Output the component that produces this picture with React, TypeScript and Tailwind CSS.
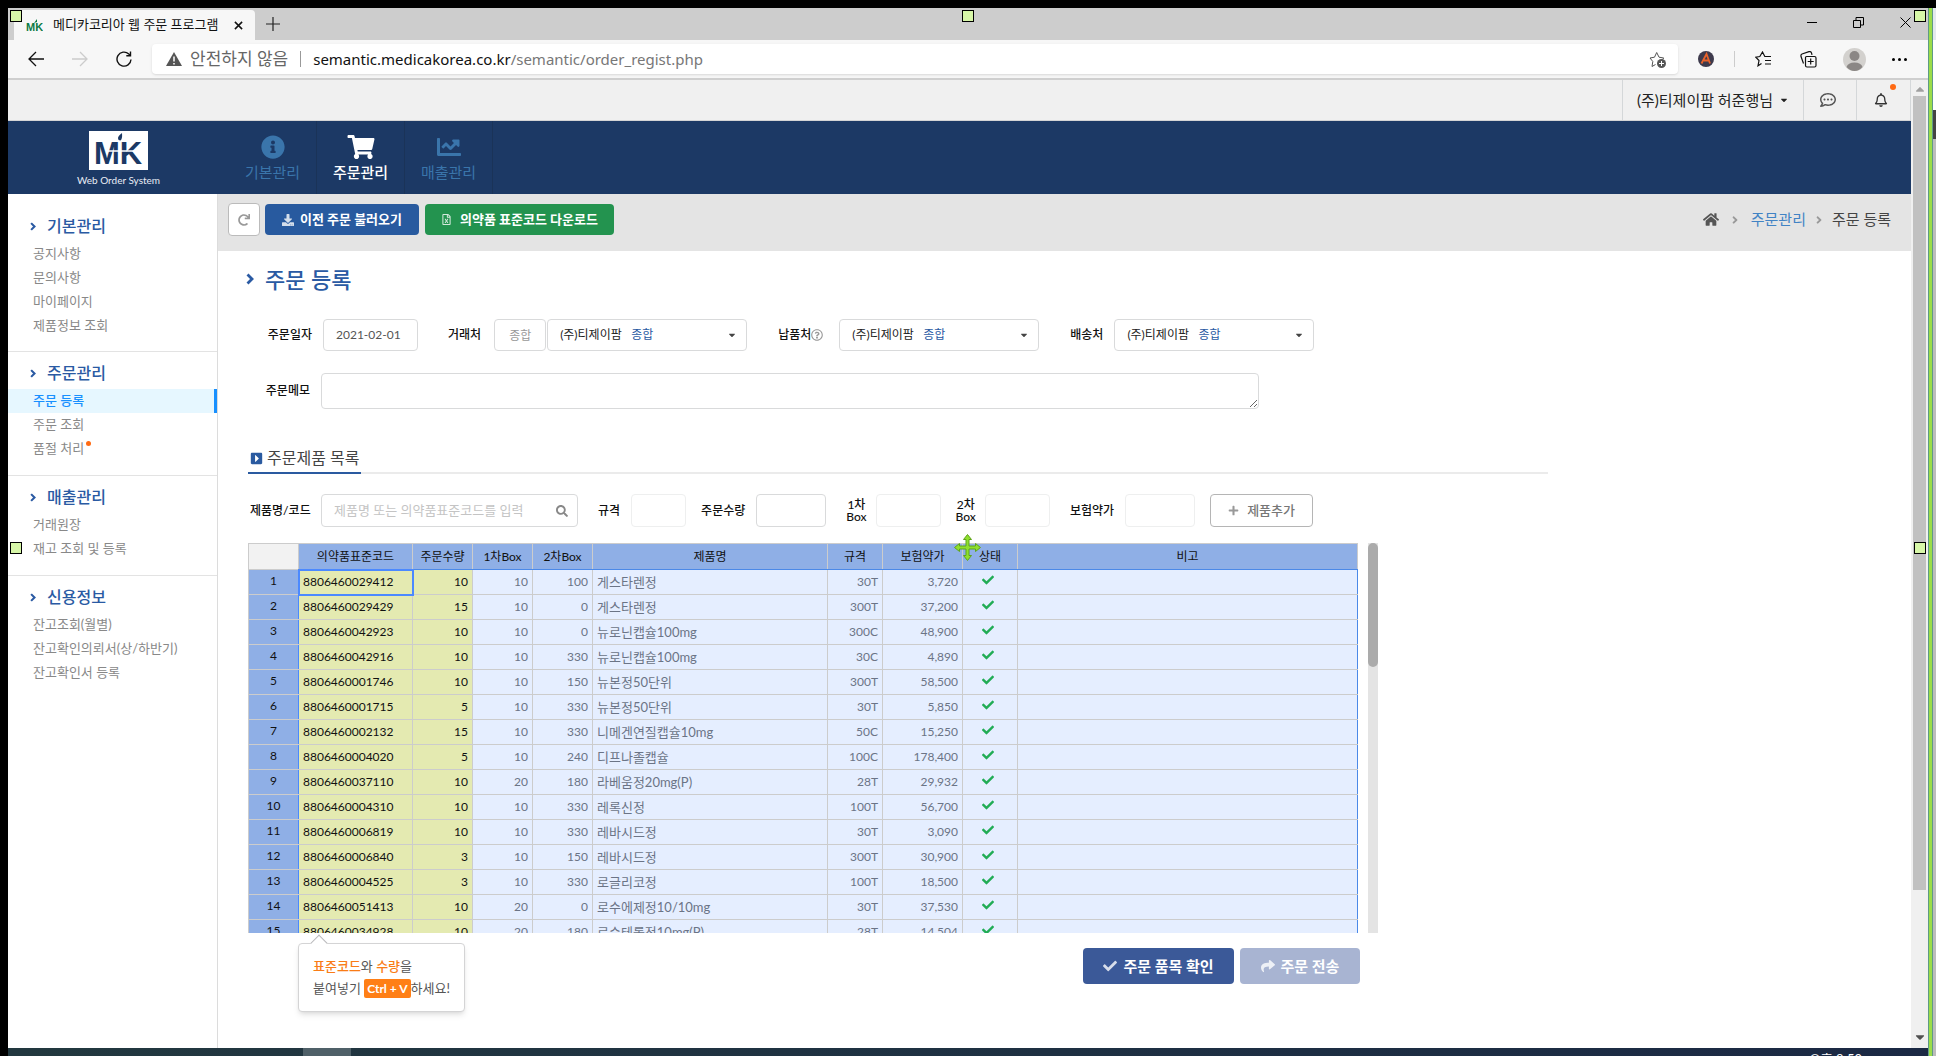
import type { ReactNode } from "react";
import {
  FaInfoCircle,
  FaShoppingCart,
  FaChartLine,
  FaDownload,
  FaRegFileExcel,
  FaHome,
  FaCheck,
  FaShare,
  FaPlus,
  FaSearch,
  FaCaretDown,
  FaCaretUp,
  FaRedo,
  FaAngleRight,
  FaRegCommentDots,
  FaRegBell,
  FaRegQuestionCircle,
  FaCaretSquareRight,
} from "react-icons/fa";

type Row = [string, number, number, number, string, string, string];

const rows: Row[] = [
  ["8806460029412", 10, 10, 100, "게스타렌정", "30T", "3,720"],
  ["8806460029429", 15, 10, 0, "게스타렌정", "300T", "37,200"],
  ["8806460042923", 10, 10, 0, "뉴로닌캡슐100mg", "300C", "48,900"],
  ["8806460042916", 10, 10, 330, "뉴로닌캡슐100mg", "30C", "4,890"],
  ["8806460001746", 10, 10, 150, "뉴본정50단위", "300T", "58,500"],
  ["8806460001715", 5, 10, 330, "뉴본정50단위", "30T", "5,850"],
  ["8806460002132", 15, 10, 330, "니메겐연질캡슐10mg", "50C", "15,250"],
  ["8806460004020", 5, 10, 240, "디프나졸캡슐", "100C", "178,400"],
  ["8806460037110", 10, 20, 180, "라베움정20mg(P)", "28T", "29,932"],
  ["8806460004310", 10, 10, 330, "레록신정", "100T", "56,700"],
  ["8806460006819", 10, 10, 330, "레바시드정", "30T", "3,090"],
  ["8806460006840", 3, 10, 150, "레바시드정", "300T", "30,900"],
  ["8806460004525", 3, 10, 330, "로글리코정", "100T", "18,500"],
  ["8806460051413", 10, 20, 0, "로수에제정10/10mg", "30T", "37,530"],
  ["8806460034928", 10, 20, 180, "로수테롤정10mg(P)", "28T", "14,504"],
];

const menu = [
  { title: "기본관리", items: ["공지사항", "문의사항", "마이페이지", "제품정보 조회"] },
  { title: "주문관리", items: ["주문 등록", "주문 조회", "품절 처리"] },
  { title: "매출관리", items: ["거래원장", "재고 조회 및 등록"] },
  { title: "신용정보", items: ["잔고조회(월별)", "잔고확인의뢰서(상/하반기)", "잔고확인서 등록"] },
];

function BoldChevron({ className }: { className: string }) {
  return (
    <svg className={className} viewBox="0 0 8 12" fill="none" aria-hidden="true">
      <path d="M1.500 1.500L6 6l-4.500 4.500" stroke="currentColor" strokeWidth="2.800" />
    </svg>
  );
}

function TitleBar() {
  return (
    <div className="flex h-8 shrink-0 items-stretch bg-[#cdcdcd] pl-1.5">
      <div className="mt-[2px] flex w-[241px] items-center rounded-t bg-[#f7f7f7] pl-3 text-[13px] text-[#111]">
        <svg width="17" height="14" viewBox="0 0 17 14" aria-hidden="true">
          <text x="0" y="13" fontSize="11" fontWeight="700" fontFamily="Liberation Sans" fill="#0b7a45">
            MK
          </text>
          <path d="M8 5 l3 -4 l0 3z" fill="#0b7a45" />
        </svg>
        <span className="ml-2.5 whitespace-nowrap text-[13px]">메디카코리아 웹 주문 프로그램</span>
        <button aria-label="탭 닫기" className="mr-3 ml-auto">
          <svg width="9" height="9" viewBox="0 0 10 10" stroke="#111" strokeWidth="1.7">
            <path d="M1 1l8 8M9 1l-8 8" />
          </svg>
        </button>
      </div>
      <button aria-label="새 탭" className="ml-2.5 flex items-center">
        <svg width="16" height="16" viewBox="0 0 16 16" stroke="#222" strokeWidth="1.2">
          <path d="M8 1v14M1 8h14" />
        </svg>
      </button>
      <div className="mr-[17px] ml-auto flex items-center gap-9 pt-2 pb-3">
        <button aria-label="최소화">
          <svg width="10" height="10" viewBox="0 0 10 10" stroke="#000">
            <path d="M0 5.500h10" />
          </svg>
        </button>
        <button aria-label="이전 크기로">
          <svg width="11" height="11" viewBox="0 0 11 11" stroke="#000" fill="none">
            <path d="M.5 3.500h7v7h-7zM3 3V.5h7.500V8H8" />
          </svg>
        </button>
        <button aria-label="닫기">
          <svg width="11" height="11" viewBox="0 0 11 11" stroke="#000">
            <path d="M.5 .5l10 10M10.500 .5l-10 10" />
          </svg>
        </button>
      </div>
    </div>
  );
}

function AddressBar() {
  return (
    <div className="flex h-[40px] shrink-0 items-center border-b-2 border-[#cfcfcf] bg-[#f7f7f7] pl-5">
      <button aria-label="뒤로">
        <svg width="16" height="16" viewBox="0 0 16 16" stroke="#111" strokeWidth="1.3" fill="none">
          <path d="M16 8H1M8 1L1 8l7 7" />
        </svg>
      </button>
      <button aria-label="앞으로" className="ml-7">
        <svg width="16" height="16" viewBox="0 0 16 16" stroke="#ccc" strokeWidth="1.3" fill="none">
          <path d="M0 8h15M8 1l7 7-7 7" />
        </svg>
      </button>
      <button aria-label="새로 고침" className="ml-7">
        <svg width="16" height="16" viewBox="0 0 16 16" stroke="#111" strokeWidth="1.4" fill="none">
          <path d="M15 8.500A7 7 0 1 1 12.800 3L14.500 4.500M14.500 .5v4.200h-4.200" />
        </svg>
      </button>
      <div className="ml-5 flex h-[30px] flex-1 items-center rounded bg-white pr-3 pl-3.5 shadow-sm">
        <svg width="16" height="14" viewBox="0 0 16 14" aria-hidden="true">
          <path d="M8 0l8 14H0z" fill="#555" />
          <path d="M8 4.500v5M8 11v1.500" stroke="#fff" strokeWidth="1.500" />
        </svg>
        <span className="ml-2 text-[17px] text-[#666]">안전하지 않음</span>
        <span className="mx-3 h-4 w-px bg-[#999]" />
        <span className="font-['Noto_Sans'] text-[15px] text-[#111]">
          semantic.medicakorea.co.kr<span className="text-[#777]">/semantic/order_regist.php</span>
        </span>
        <svg className="ml-auto" width="17" height="17" viewBox="0 0 17 17" fill="none" aria-hidden="true">
          <path d="M6.500 13.500l-3.500 2 .8-5L1 7l4.500-.8L7.700 1.500 10 6.200l4.800.8-1.500 1.500" stroke="#555" />
          <circle cx="12.500" cy="12.500" r="4.500" fill="#555" />
          <path d="M12.500 10v5M10 12.500h5" stroke="#fff" />
        </svg>
      </div>
      <div className="ml-5 flex items-center pr-[21px]">
        <svg width="16" height="16" viewBox="0 0 16 16" aria-hidden="true">
          <circle cx="8" cy="8" r="8" fill="#3d3a4c" />
          <path d="M3.500 12.500L8.500 3l3.500 9.500M6 9.500h5" stroke="#e8622a" strokeWidth="1.800" fill="none" />
        </svg>
        <span className="ml-5 h-4 w-px bg-[#ccc]" />
        <button aria-label="즐겨찾기" className="ml-5">
          <svg width="17" height="16" viewBox="0 0 17 16" stroke="#111" strokeWidth="1.200" fill="none">
            <path d="M6.500 12.500L3 14.800 4 9.500.8 6.200l4-.7L7.500 1l2.300 4.500H16M10 9.500h6M10 13h6" />
          </svg>
        </button>
        <button aria-label="컬렉션" className="ml-7">
          <svg width="17" height="17" viewBox="0 0 17 17" stroke="#111" strokeWidth="1.200" fill="none">
            <path d="M3.500 12.500L1 5.500Q.6 3.500 2 3l7-2.300q2-.5 2.500 1.200l.5 2M5.500 6.500q0-1 1-1h8q1.500 0 1.500 1.500v7.500q0 1.500-1.500 1.500h-7.500q-1.500 0-1.500-1.500zM10.700 7.500v6M7.700 10.500h6" />
          </svg>
        </button>
        <svg className="ml-[26px]" width="23" height="23" viewBox="0 0 23 23" aria-hidden="true">
          <circle cx="11.500" cy="11.500" r="11.500" fill="#d3d1ce" />
          <circle cx="11.500" cy="8" r="5" fill="#8b8785" />
          <path d="M3.500 19q1.500-4.500 8-4.500t8 4.500q-3.500 4-8 4t-8-4z" fill="#8b8785" />
        </svg>
        <button aria-label="설정 및 기타" className="ml-[26px] flex gap-[3px]">
          <i className="size-[3px] rounded-full bg-black" />
          <i className="size-[3px] rounded-full bg-black" />
          <i className="size-[3px] rounded-full bg-black" />
        </button>
      </div>
    </div>
  );
}

function UserBar() {
  return (
    <div className="flex h-[41px] shrink-0 items-stretch justify-end border-b border-[#d4d4d5] bg-[#f0f0f0] text-[#333]">
      <button className="flex w-[181px] items-center justify-center gap-1.5 border-l border-[#d4d7d9] text-[15px] text-[#222]">
        (주)티제이팜 허준행님 <FaCaretDown className="size-2.5" />
      </button>
      <button aria-label="메시지" className="flex w-[53px] items-center justify-center border-l border-[#d4d7d9] pr-1">
        <FaRegCommentDots className="size-4 text-[#555]" />
      </button>
      <button
        aria-label="알림"
        className="relative flex w-[55px] items-center justify-center border-x border-[#d4d7d9] pr-1.5"
      >
        <FaRegBell className="size-3.5 text-[#333]" />
        <span className="absolute top-1 right-3.5 size-1.5 rounded-full bg-[#ff6a13]" />
      </button>
    </div>
  );
}

function NavItem({ icon, label, active }: { icon: ReactNode; label: string; active?: boolean }) {
  return (
    <a
      href="#"
      className={
        "flex w-[88px] flex-col items-center border-r border-[#1a3358] pt-[14px] text-[15px] leading-[26px] " +
        (active ? "font-medium text-white" : "text-[#3a75ab]")
      }
    >
      {icon}
      {label}
    </a>
  );
}

function Header() {
  return (
    <header className="flex h-[73px] shrink-0 bg-[#1c3965]">
      <div className="flex w-[221px] flex-col items-center pt-[10px]">
        <svg width="59" height="39" viewBox="0 0 59 39" aria-label="MK">
          <rect width="59" height="39" fill="#fff" />
          <text x="5" y="33" fontSize="31" fontWeight="700" fontFamily="Liberation Sans" fill="#1c3965">
            MK
          </text>
          <path d="M18 20h34" stroke="#fff" strokeWidth="1.500" />
          <path d="M29 7q0-2 4-5 .5 6-1.500 7.500-2.500 0-2.500-2.500z" fill="#1c3965" />
        </svg>
        <span className="text-[10px] leading-5 whitespace-nowrap text-[#e8edf5]">Web Order System</span>
      </div>
      <nav className="flex">
        <NavItem icon={<FaInfoCircle className="size-6" />} label="기본관리" />
        <NavItem icon={<FaShoppingCart className="h-6 w-7" />} label="주문관리" active />
        <NavItem icon={<FaChartLine className="size-6" />} label="매출관리" />
      </nav>
    </header>
  );
}

function Sidebar() {
  return (
    <aside className="w-[210px] shrink-0 border-r border-[#dcdcdc] bg-white">
      {menu.map((section, i) => (
        <section
          key={section.title}
          className={i === 0 ? "pt-[18px] pb-[13px]" : "border-t border-[#e3e3e3] pt-[7px] pb-3.5"}
        >
          <h2 className="mb-0.5 flex h-7 items-center gap-[11px] pl-[22px] text-base font-medium text-[#2a5aa3]">
            <BoldChevron className="h-[9px] w-1.5" />
            {section.title}
          </h2>
          <ul>
            {section.items.map((item) => (
              <li key={item}>
                <a
                  href="#"
                  className={
                    "flex h-6 items-center pl-[25px] text-[13px] " +
                    (item === "주문 등록"
                      ? "border-r-[3px] border-[#1890ff] bg-[#e6f7ff] font-medium text-[#1890ff]"
                      : "text-[#888]")
                  }
                >
                  {item}
                  {item === "품절 처리" && <i className="mb-3 ml-0.5 size-[5px] rounded-full bg-[#ff6a13]" />}
                </a>
              </li>
            ))}
          </ul>
        </section>
      ))}
    </aside>
  );
}

function ActionBar() {
  return (
    <div className="flex h-[57px] shrink-0 items-center bg-[#e4e4e4] pr-5 pb-1.5 pl-2.5">
      <button
        aria-label="새로 고침"
        className="mr-[5px] flex h-[33px] w-8 items-center justify-center rounded border border-[#bbb] bg-white text-[#999]"
      >
        <FaRedo className="size-3" />
      </button>
      <button className="mr-1.5 flex h-[31px] w-[154px] items-center justify-center gap-1.5 rounded bg-[#285a9f] text-[13px] font-bold text-white">
        <FaDownload className="size-3 opacity-80" />
        이전 주문 불러오기
      </button>
      <button className="flex h-[31px] w-[189px] items-center justify-center gap-2 rounded bg-[#23934f] text-[13px] font-bold text-white">
        <FaRegFileExcel className="size-[11px] opacity-80" />
        의약품 표준코드 다운로드
      </button>
      <nav className="ml-auto flex items-center text-[15px] text-[#444]">
        <a href="#" aria-label="홈">
          <FaHome className="h-[15px] w-4 text-[#555]" />
        </a>
        <FaAngleRight className="mx-2.5 size-3 text-[#999]" />
        <a href="#" className="text-[#4183c4]">
          주문관리
        </a>
        <FaAngleRight className="mx-[7px] size-3 text-[#999]" />
        <span>주문 등록</span>
      </nav>
    </div>
  );
}

function AccountSelect({ id }: { id: string }) {
  return (
    <div className="relative h-8 w-[200px]">
      <select
        id={id}
        className="h-full w-full appearance-none rounded border border-[#d9dadb] bg-white pl-3 text-xs text-[#222]"
      >
        <option>(주)티제이팜</option>
      </select>
      <span className="pointer-events-none absolute inset-y-0 right-2.5 left-[84px] flex items-center justify-between pb-px text-xs text-[#2a5aa3]">
        종합
        <FaCaretDown className="size-2.5 text-[#444]" />
      </span>
    </div>
  );
}

const label = "shrink-0 whitespace-nowrap text-xs font-medium text-[#111]";
const field = "rounded border border-[#d9dadb] bg-white text-xs";
const dimField = "h-[33px] rounded border border-[#eeefef] bg-white text-xs";

function OrderForm() {
  return (
    <form className="text-xs">
      <div className="mt-[26px] flex items-center">
        <label htmlFor="date" className={label + " mr-[11px] w-16 text-right"}>
          주문일자
        </label>
        <input id="date" defaultValue="2021-02-01" className={field + " h-8 w-[95px] pb-0.5 pl-3 text-[#555]"} />
        <label htmlFor="client" className={label + " mr-[13px] ml-[30px]"}>
          거래처
        </label>
        <input
          aria-label="거래처 구분"
          defaultValue="종합"
          className={field + " mr-px h-8 w-[52px] pb-0.5 pl-3.5 text-[#999]"}
        />
        <AccountSelect id="client" />
        <label htmlFor="supply" className={label + " mr-4 ml-[31px] flex items-center"}>
          납품처
          <FaRegQuestionCircle className="size-3 text-[#999]" />
        </label>
        <AccountSelect id="supply" />
        <label htmlFor="delivery" className={label + " mr-[11px] ml-[31px]"}>
          배송처
        </label>
        <AccountSelect id="delivery" />
      </div>
      <div className="mt-[22px] flex items-center">
        <label htmlFor="memo" className={label + " mr-[11px] w-[62px] text-right"}>
          주문메모
        </label>
        <textarea id="memo" rows={1} className={field + " h-9 w-[938px] resize"} />
      </div>
    </form>
  );
}

function ProductForm() {
  return (
    <form className="mt-5 flex items-center">
      <label htmlFor="product" className={label + " w-[73px] pl-0.5"}>
        제품명/코드
      </label>
      <div className="relative h-[33px] w-[257px]">
        <input
          id="product"
          placeholder="제품명 또는 의약품표준코드를 입력"
          className={field + " h-full w-full pr-8 pb-0.5 pl-3 text-[13px] placeholder:text-[#c4c4c4]"}
        />
        <FaSearch className="absolute top-[11px] right-2.5 size-3 text-[#888]" />
      </div>
      <label htmlFor="spec" className={label + " mr-[11px] ml-5"}>
        규격
      </label>
      <input id="spec" className={dimField + " w-[55px]"} />
      <label htmlFor="qty" className={label + " mr-[11px] ml-[15px]"}>
        주문수량
      </label>
      <input id="qty" className={field + " h-[33px] w-[70px]"} />
      <label htmlFor="box1" className={label + " mr-[9px] ml-5 text-center leading-3"}>
        1차
        <br />
        Box
      </label>
      <input id="box1" className={dimField + " w-[65px]"} />
      <label htmlFor="box2" className={label + " mr-[9px] ml-[15px] text-center leading-3"}>
        2차
        <br />
        Box
      </label>
      <input id="box2" className={dimField + " w-[65px]"} />
      <label htmlFor="price" className={label + " mr-[11px] ml-5"}>
        보험약가
      </label>
      <input id="price" className={dimField + " w-[70px]"} />
      <button
        type="button"
        className="ml-[15px] flex h-[33px] w-[103px] items-center justify-center gap-2 rounded border border-[#b5b5b5] bg-white text-[13px] font-medium text-[#777]"
      >
        <FaPlus className="size-[11px] text-[#999]" />
        제품추가
      </button>
    </form>
  );
}

const head = "border border-[#ccc] border-b-[#4b89e8] bg-[#8fafe6] font-normal text-[#111]";
const cell = "border border-[#ccc] px-1 text-[#6b7486]";

function OrderTable() {
  return (
    <div className="relative mt-4">
      <div className="flex h-[390px] overflow-hidden">
        <table className="w-[1110px] table-fixed border-collapse border-r border-[#4b89e8] bg-[#e5eeff] text-xs">
          <colgroup>
            <col className="w-[50px]" />
            <col className="w-[114px]" />
            <col className="w-[60px]" />
            <col className="w-[60px]" />
            <col className="w-[60px]" />
            <col className="w-[235px]" />
            <col className="w-[55px]" />
            <col className="w-[80px]" />
            <col className="w-[55px]" />
            <col />
          </colgroup>
          <thead>
            <tr className="h-[26px]">
              <th className="border border-[#ccc] bg-[#f2f2f2]" aria-label="번호" />
              {["의약품표준코드", "주문수량", "1차Box", "2차Box", "제품명", "규격", "보험약가", "상태", "비고"].map(
                (t) => (
                  <th key={t} className={head}>
                    {t}
                  </th>
                ),
              )}
            </tr>
          </thead>
          <tbody>
            {rows.map((r, i) => (
              <tr key={r[0]} className="h-[25px]">
                <th className="border border-[#ccc] border-r-[#4b89ff] bg-[#8fafe6] pb-0.5 font-normal text-[#111]">
                  {i + 1}
                </th>
                <td
                  className={
                    "border border-[#ccc] border-l-[#4b89ff] bg-[#e4eab1] px-1 text-[#111] " +
                    (i === 0 ? "outline-2 -outline-offset-1 outline-[#4b89ff]" : "")
                  }
                >
                  {r[0]}
                </td>
                <td className="border border-[#ccc] bg-[#e4eab1] px-1 text-right text-[#111]">{r[1]}</td>
                <td className={cell + " text-right"}>{r[2]}</td>
                <td className={cell + " text-right"}>{r[3]}</td>
                <td className={cell + " text-[13px] leading-4 whitespace-nowrap"}>{r[4]}</td>
                <td className={cell + " text-right"}>{r[5]}</td>
                <td className={cell + " text-right"}>{r[6]}</td>
                <td className="border border-[#ccc] pr-1">
                  <FaCheck className="mx-auto mb-1 size-3 text-[#21ac55]" aria-label="확인" />
                </td>
                <td className="border border-[#ccc] border-r-[#4b89e8]" />
              </tr>
            ))}
          </tbody>
        </table>
        <div className="ml-2.5 w-2.5 bg-[#e4e4e4]">
          <div className="h-[124px] rounded-full bg-[#ababab]" />
        </div>
      </div>
      <div
        role="tooltip"
        className="absolute top-[400px] left-[50px] z-10 rounded border border-[#d4d4d5] bg-white px-3.5 pt-[11px] pb-3 text-[13px] leading-[22px] text-[#555] shadow-md"
      >
        <i className="absolute -top-[7px] left-3.5 size-3 rotate-45 border-t border-l border-[#bababc] bg-white" />
        <p>
          <b className="font-medium text-[#f97c16]">표준코드</b>와 <b className="font-medium text-[#f97c16]">수량</b>을
        </p>
        <p className="whitespace-nowrap">
          붙여넣기 <kbd className="rounded-xs bg-[#ff7f16] px-[3px] py-0.5 font-[Lato] text-xs font-bold text-white">Ctrl + V</kbd>
          하세요!
        </p>
      </div>
    </div>
  );
}

function MainPage() {
  return (
    <main className="min-w-0 flex-1 bg-white">
      <ActionBar />
      <div className="max-w-[1330px] pl-[30px]">
        <h1 className="mt-[14px] -ml-0.5 flex h-7 items-center gap-[11px] text-[22px] font-medium text-[#2a5aa3]">
          <BoldChevron className="h-3 w-2" />
          주문 등록
        </h1>
        <OrderForm />
        <div className="mt-[35px] flex h-[30px] border-b-2 border-[#ebebeb]">
          <h2 className="-mb-0.5 flex items-center gap-1 border-b-2 border-[#2a5aa0] pr-0.5 pl-0.5 text-base text-[#444]">
            <FaCaretSquareRight className="size-[13px] text-[#2a5aa0]" />
            주문제품 목록
          </h2>
        </div>
        <ProductForm />
        <OrderTable />
        <div className="mt-[15px] flex max-w-[1112px] justify-end gap-1.5">
          <button className="flex h-9 w-[151px] items-center justify-center gap-1.5 rounded bg-[#3b5998] text-[15px] font-bold text-white">
            <FaCheck className="size-3.5 opacity-80" />
            주문 품목 확인
          </button>
          <button className="flex h-9 w-[120px] items-center justify-center gap-1.5 rounded bg-[#a8b4d2] text-[15px] font-bold text-white">
            <FaShare className="size-3.5 opacity-80" />
            주문 전송
          </button>
        </div>
      </div>
    </main>
  );
}

function PageScrollbar() {
  return (
    <div className="flex w-[17px] shrink-0 flex-col items-center bg-[#f0f0f0]">
      <FaCaretUp className="mt-0.5 h-3.5 w-2.5 text-[#a0a0a0]" />
      <div className="h-[794px] w-[13px] bg-[#c1c1c1]" />
      <FaCaretDown className="mt-auto mb-1 h-3.5 w-2.5 text-[#505050]" />
    </div>
  );
}

function SelectionOverlay() {
  const handle = "absolute size-3 border border-black bg-[#d7f7a8]";
  return (
    <div className="pointer-events-none absolute inset-0">
      <i className={handle + " top-2.5 left-2.5"} />
      <i className={handle + " top-2.5 left-1/2 -ml-1.5"} />
      <i className={handle + " top-2.5 right-2.5"} />
      <i className={handle + " top-[542px] left-2.5"} />
      <i className={handle + " top-[542px] right-2.5"} />
      <svg className="absolute top-[534px] left-1/2 -ml-[14px]" width="27" height="27" viewBox="0 0 27 27">
        <path
          d="M13.500 .5l4 5h-2.500v6.500h6.500v-2.500l5 4-5 4v-2.500h-6.500v6.500h2.500l-4 5-4-5h2.500v-6.500h-6.500v2.500l-5-4 5-4v2.500h6.500v-6.500h-2.500z"
          fill="#8fe02c"
          stroke="#5fa31a"
        />
      </svg>
    </div>
  );
}

export default function App() {
  return (
    <div className="flex h-screen flex-col overflow-hidden bg-black pt-2 font-[Lato,'Noto_Sans_CJK_KR',sans-serif]">
      <div className="flex min-h-0 flex-1">
        <div className="relative flex min-w-0 flex-1 pl-2">
          <div className="flex min-w-0 flex-1 flex-col">
            <TitleBar />
            <AddressBar />
            <div className="flex min-h-0 flex-1">
              <div className="flex min-w-0 flex-1 flex-col">
                <UserBar />
                <Header />
                <div className="flex min-h-0 flex-1">
                  <Sidebar />
                  <MainPage />
                </div>
              </div>
              <PageScrollbar />
            </div>
            <footer className="flex h-2 shrink-0 overflow-hidden bg-linear-to-r from-[#22383f] to-[#1b2944] text-[13px] text-white">
              <div className="ml-[295px] w-12 bg-[#4f6068]" />
              <span className="mt-[3px] mr-[66px] ml-auto leading-4">오후 8:50</span>
            </footer>
          </div>
        </div>
        <div className="w-[5px] border-x border-[#5f9a86] bg-[#9bdd48]" />
        <div className="flex w-[3px] flex-col bg-[#bcbcbc]">
          <div className="h-8 bg-[#e4e9ee]" />
          <div className="h-[70px] bg-white" />
          <div className="h-[29px] bg-[#444]" />
        </div>
      </div>
      <SelectionOverlay />
    </div>
  );
}
